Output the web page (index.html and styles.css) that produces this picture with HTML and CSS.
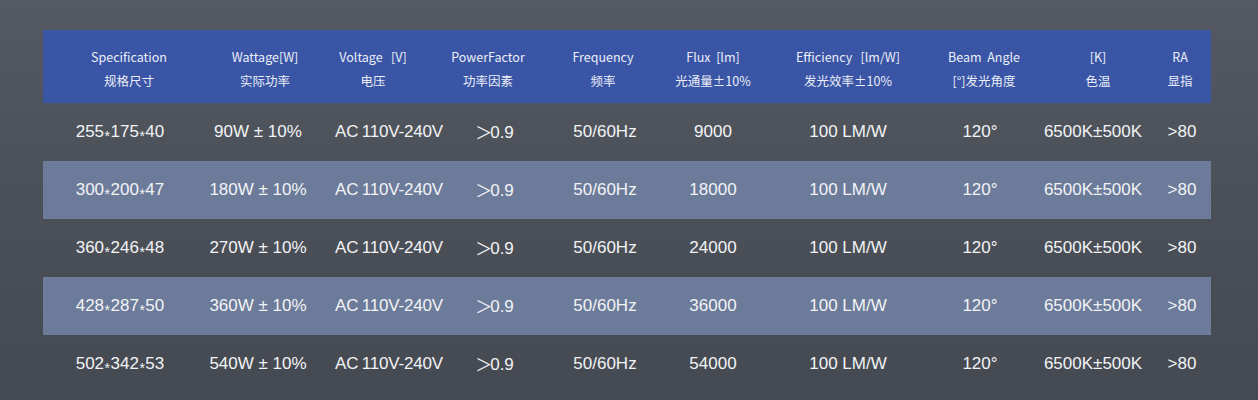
FILE: index.html
```html
<!DOCTYPE html>
<html lang="zh">
<head>
<meta charset="utf-8">
<title>Specification</title>
<link rel="stylesheet" href="styles.css">
</head>
<body>
<div class="spec-table">
  <div class="row head">
    <div class="cell h1"><span>Specification</span><span>规格尺寸</span></div>
    <div class="cell h2"><span>Wattage[W]</span><span>实际功率</span></div>
    <div class="cell h3"><span>Voltage&nbsp;&nbsp;&nbsp;[V]</span><span>电压</span></div>
    <div class="cell h4"><span>PowerFactor</span><span>功率因素</span></div>
    <div class="cell h5"><span>Frequency</span><span>频率</span></div>
    <div class="cell"><span>Flux&nbsp;&nbsp;[lm]</span><span>光通量±10%</span></div>
    <div class="cell"><span>Efficiency&nbsp;&nbsp;&nbsp;[lm/W]</span><span>发光效率±10%</span></div>
    <div class="cell h8"><span>Beam&nbsp;&nbsp;Angle</span><span>[°]发光角度</span></div>
    <div class="cell h9"><span>[K]</span><span>色温</span></div>
    <div class="cell h10"><span>RA</span><span>显指</span></div>
  </div>
  <div class="row">
    <div class="cell">255<span class="x">*</span>175<span class="x">*</span>40</div>
    <div class="cell">90W ± 10%</div>
    <div class="cell volt">AC 110V-240V</div>
    <div class="cell"><span class="gt">＞</span>0.9</div>
    <div class="cell">50/60Hz</div>
    <div class="cell">9000</div>
    <div class="cell">100 LM/W</div>
    <div class="cell">120°</div>
    <div class="cell c9">6500K±500K</div>
    <div class="cell">&gt;80</div>
  </div>
  <div class="row alt">
    <div class="cell">300<span class="x">*</span>200<span class="x">*</span>47</div>
    <div class="cell">180W ± 10%</div>
    <div class="cell volt">AC 110V-240V</div>
    <div class="cell"><span class="gt">＞</span>0.9</div>
    <div class="cell">50/60Hz</div>
    <div class="cell">18000</div>
    <div class="cell">100 LM/W</div>
    <div class="cell">120°</div>
    <div class="cell c9">6500K±500K</div>
    <div class="cell">&gt;80</div>
  </div>
  <div class="row">
    <div class="cell">360<span class="x">*</span>246<span class="x">*</span>48</div>
    <div class="cell">270W ± 10%</div>
    <div class="cell volt">AC 110V-240V</div>
    <div class="cell"><span class="gt">＞</span>0.9</div>
    <div class="cell">50/60Hz</div>
    <div class="cell">24000</div>
    <div class="cell">100 LM/W</div>
    <div class="cell">120°</div>
    <div class="cell c9">6500K±500K</div>
    <div class="cell">&gt;80</div>
  </div>
  <div class="row alt">
    <div class="cell">428<span class="x">*</span>287<span class="x">*</span>50</div>
    <div class="cell">360W ± 10%</div>
    <div class="cell volt">AC 110V-240V</div>
    <div class="cell"><span class="gt">＞</span>0.9</div>
    <div class="cell">50/60Hz</div>
    <div class="cell">36000</div>
    <div class="cell">100 LM/W</div>
    <div class="cell">120°</div>
    <div class="cell c9">6500K±500K</div>
    <div class="cell">&gt;80</div>
  </div>
  <div class="row">
    <div class="cell">502<span class="x">*</span>342<span class="x">*</span>53</div>
    <div class="cell">540W ± 10%</div>
    <div class="cell volt">AC 110V-240V</div>
    <div class="cell"><span class="gt">＞</span>0.9</div>
    <div class="cell">50/60Hz</div>
    <div class="cell">54000</div>
    <div class="cell">100 LM/W</div>
    <div class="cell">120°</div>
    <div class="cell c9">6500K±500K</div>
    <div class="cell">&gt;80</div>
  </div>
</div>
</body>
</html>
```
FILE: styles.css
```css
html, body {
  margin: 0;
  padding: 0;
}
body {
  width: 1258px;
  height: 400px;
  overflow: hidden;
  background: linear-gradient(180deg, #545962 0%, #4c5159 45%, #454a52 100%);
  font-family: "Liberation Sans", "Noto Sans CJK SC", sans-serif;
  color: #f2f3f5;
}
.spec-table {
  margin: 30px 0 0 43px;
  width: 1168px;
}
.row {
  display: grid;
  grid-template-columns: 154px 122px 140px 74px 144px 72px 198px 66px 140px 58px;
  height: 58px;
  align-items: center;
  font-size: 17px;
}
.row.alt {
  background: #6c7b9a;
}
.cell {
  text-align: center;
  white-space: nowrap;
  line-height: 20px;
  min-width: 0;
}
.cell.c9 {
  padding-left: 20px;
}
.row.head {
  height: 73px;
  background: #3a55a5;
  font-family: "Noto Sans CJK SC", sans-serif;
  font-size: 12.5px;
  color: #eaeef8;
  align-items: start;
}
.head .cell {
  display: flex;
  flex-direction: column;
  align-items: center;
  padding-top: 15px;
  line-height: 24px;
}
.head .h1 { padding-left: 18px; }
.head .h2 { padding-left: 14px; }
.head .h3 { padding-right: 32px; }
.head .h4 { padding-right: 16px; }
.head .h5 { padding-right: 4px; }
.head .h8 { padding-left: 8px; }
.head .h9 { padding-left: 30px; }
.head .h10 { padding-right: 4px; }
.x {
  font-size: 14px;
  transform: translateY(4px);
  display: inline-block;
  margin: 0 0.5px;
}
.gt {
  font-family: "Noto Sans CJK SC", sans-serif;
  font-size: 17px;
  vertical-align: -1px;
  margin: 0 -2px 0 -3px;
}
.volt {
  word-spacing: -1px;
  letter-spacing: -0.2px;
}
```
